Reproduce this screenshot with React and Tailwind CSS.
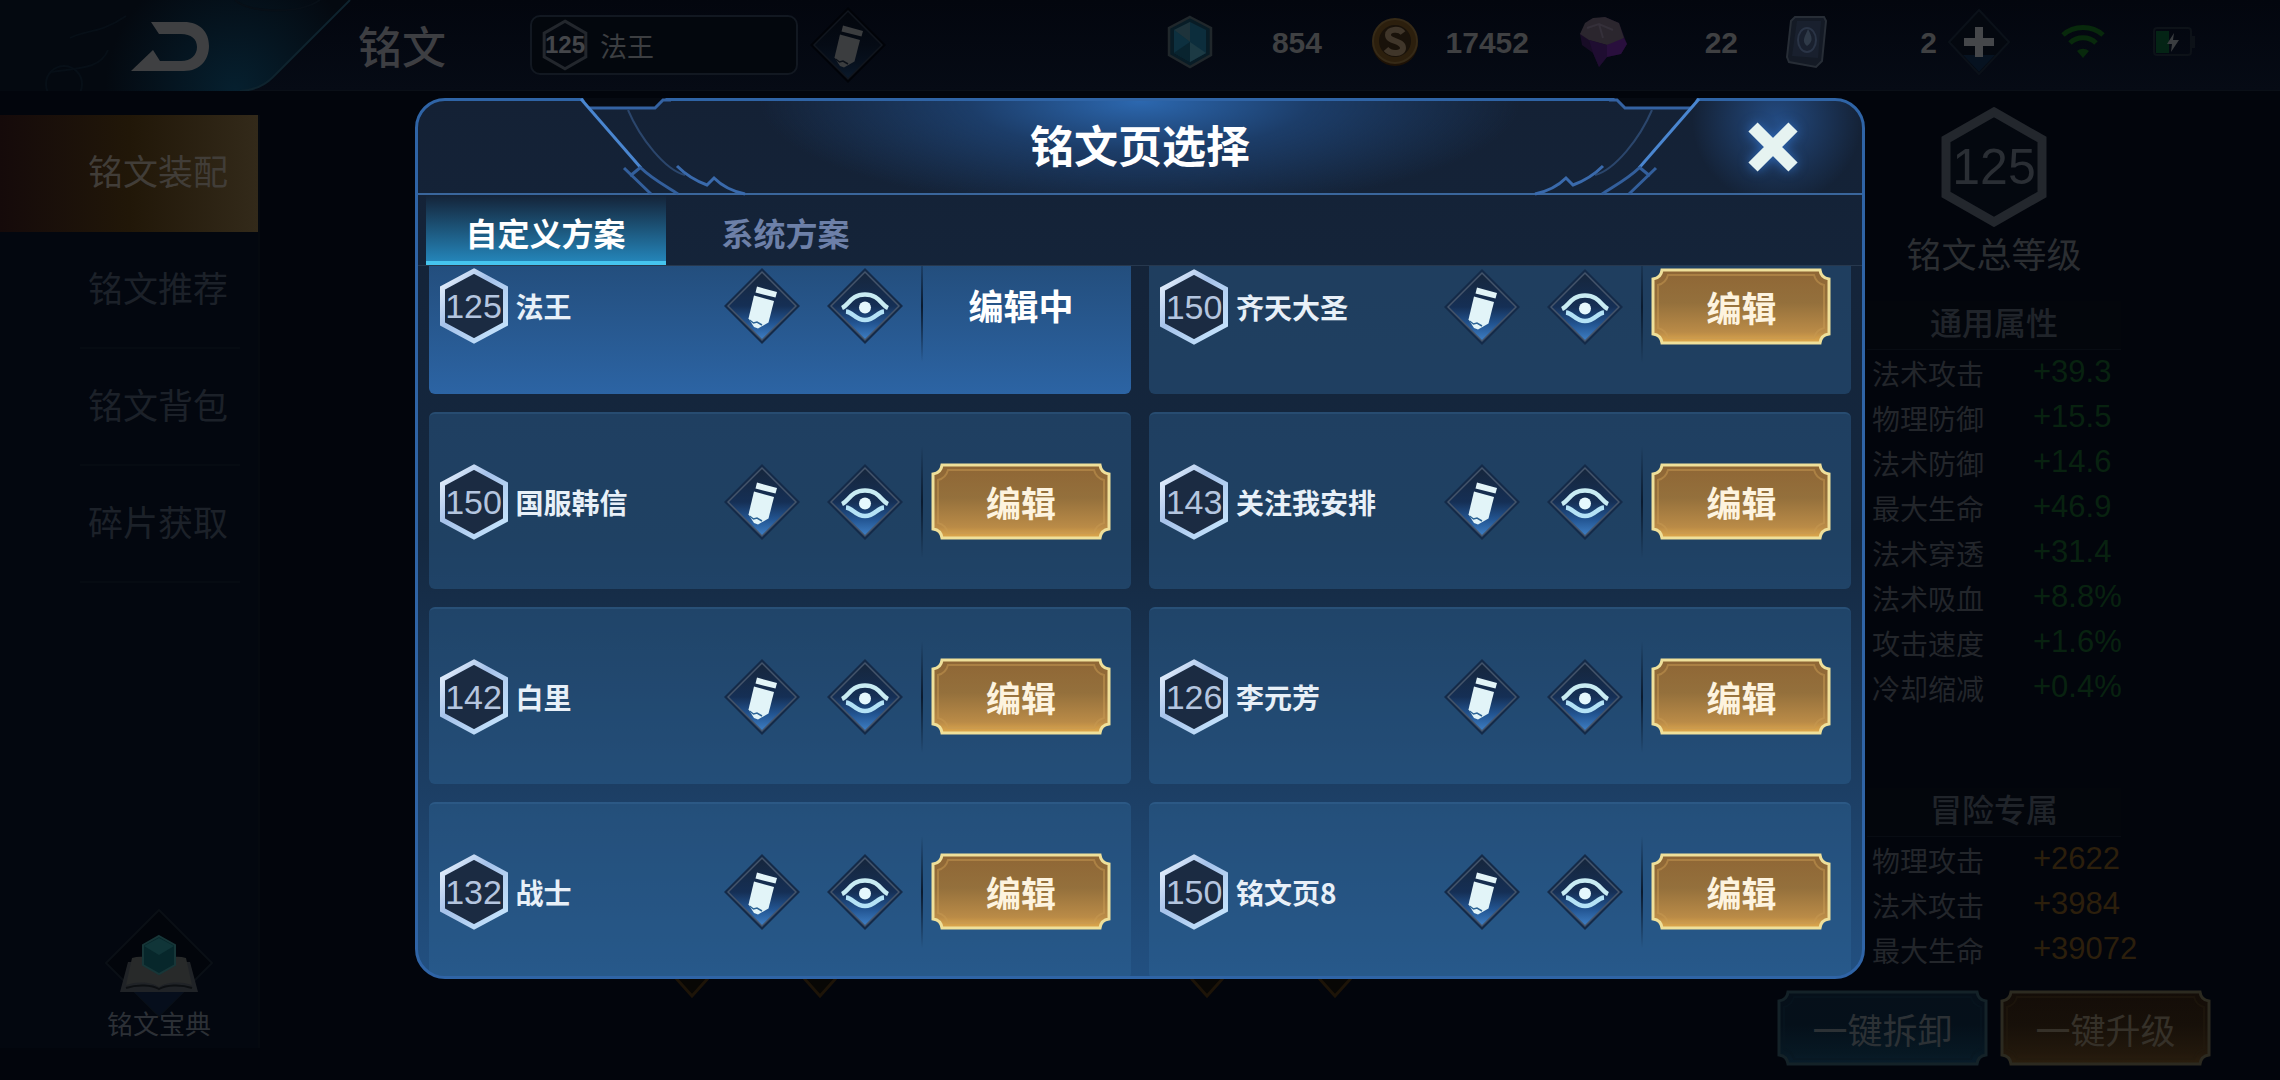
import { useId, useLayoutEffect, useRef, useState } from 'react'
import clsx from 'clsx'

const PAGES = [
  { level: 125, name: '法王', editing: true },
  { level: 150, name: '齐天大圣' },
  { level: 150, name: '国服韩信' },
  { level: 143, name: '关注我安排' },
  { level: 142, name: '白里' },
  { level: 126, name: '李元芳' },
  { level: 132, name: '战士' },
  { level: 150, name: '铭文页8' },
]

const TABS = ['自定义方案', '系统方案']
const MENU = ['铭文装配', '铭文推荐', '铭文背包', '碎片获取']

// Where the page list rests when the dialog opens
const LIST_SCROLL = 49

const COMMON_STATS = [
  ['法术攻击', '+39.3'],
  ['物理防御', '+15.5'],
  ['法术防御', '+14.6'],
  ['最大生命', '+46.9'],
  ['法术穿透', '+31.4'],
  ['法术吸血', '+8.8%'],
  ['攻击速度', '+1.6%'],
  ['冷却缩减', '+0.4%'],
]

const ADVENTURE_STATS = [
  ['物理攻击', '+2622'],
  ['法术攻击', '+3984'],
  ['最大生命', '+39072'],
]

// ─── Icons ────────────────────────────────────────────────────────────────────

function DiamondFrame({ dim, children }) {
  const id = useId()
  return (
    <svg className="size-[76px]" viewBox="0 0 76 76" aria-hidden>
      <defs>
        <linearGradient id={id} x1="0" y1="0" x2="0" y2="1">
          <stop offset="0" stopColor={dim ? '#03060c' : '#16263c'} />
          <stop offset="0.5" stopColor={dim ? '#050b15' : '#152f55'} />
          <stop offset="0.75" stopColor={dim ? '#07101d' : '#225491'} />
          <stop offset="1" stopColor={dim ? '#0b1a2c' : '#3f80c6'} />
        </linearGradient>
      </defs>
      <path d="M38 0 76 38 38 76 0 38Z" fill={dim ? '#010308' : '#142a48'} />
      <path
        d="M38 4 72 38 38 72 4 38Z"
        fill={`url(#${id})`}
        stroke={dim ? '#10151d' : '#44546a'}
        strokeWidth="1.5"
      />
      {children}
    </svg>
  )
}

function PencilDiamond({ dim }) {
  return (
    <DiamondFrame dim={dim}>
      <g fill={dim ? '#3b3d3f' : '#e2f4f8'}>
        <path d="M33 18.500 53 24 51.500 29.500 31.500 24.500Z" />
        <path d="M30 27.500 50 33 44.500 54.500 34 60.500 30 59 24.500 50.500Z" />
      </g>
      <path d="M25.500 52 29.500 55 33 54 38 57" fill="none" stroke={dim ? '#0b1018' : '#2c6395'} strokeWidth="1.5" />
    </DiamondFrame>
  )
}

function EyeDiamond() {
  return (
    <DiamondFrame>
      <g fill="none" stroke="#b4e2f6" strokeWidth="4.500">
        <path d="M15 40C22 37 24 26.500 38 26.500S54 37 61 40" stroke="#c8ebf2" />
        <path d="M19 43.500C26 44 28 52 38 52S50 44 57 43.500" />
      </g>
      <circle cx="38" cy="39.500" r="6" fill="#e6f8fd" />
    </DiamondFrame>
  )
}

function HexBadge({ level }) {
  const id = useId()
  return (
    <div className="grid shrink-0 place-items-center">
      <svg className="col-start-1 row-start-1 h-[76px] w-[68px]" viewBox="0 0 68 76" aria-hidden>
        <defs>
          <linearGradient id={id} x1="0" y1="0" x2="1" y2="1">
            <stop offset="0" stopColor="#f1f8ff" />
            <stop offset="0.4" stopColor="#a6c2ea" />
            <stop offset="1" stopColor="#c9e8ff" />
          </linearGradient>
        </defs>
        <path d="M34 3 65.500 20V56L34 73 2.500 56V20Z" fill="#1b2b42" stroke={`url(#${id})`} strokeWidth="5" />
      </svg>
      <span className="col-start-1 row-start-1 font-['Liberation_Sans',sans-serif] text-[34px] leading-none text-[#b4c5df]">
        {level}
      </span>
    </div>
  )
}

function GemIcon() {
  return (
    <svg className="h-[54px] w-[46px]" viewBox="0 0 46 54" aria-hidden>
      <path d="M23 2 44 13V40L23 52 2 40V13Z" fill="#081c26" stroke="#20272b" strokeWidth="2.5" />
      <path d="M23 7 39 15V38L23 47 7 38V15Z" fill="#0c2d3c" />
      <path d="M23 7 7 15 23 27Z" fill="#1e333b" />
      <path d="M7 15V38L23 27Z" fill="#0d303f" />
      <path d="M23 27 39 38 23 47Z" fill="#1c3a44" />
      <path d="M7 38 23 47V27Z" fill="#09242f" />
    </svg>
  )
}

function CoinIcon() {
  return (
    <svg className="size-[50px]" viewBox="0 0 50 50" aria-hidden>
      <circle cx="25" cy="26" r="23" fill="#1e1206" />
      <circle cx="25" cy="24" r="22" fill="#2c1f0d" stroke="#362a17" strokeWidth="2" />
      <circle cx="25" cy="24" r="16" fill="#19120a" />
      <path
        d="M33 16C29 11 18 12 18 18 18 25 33 23 33 31 33 37 21 38 16 32"
        fill="none"
        stroke="#40362a"
        strokeWidth="6"
      />
    </svg>
  )
}

function CrystalIcon() {
  return (
    <svg className="h-[52px] w-[52px]" viewBox="0 0 52 52" aria-hidden>
      <path d="M3 18 12 4 28 1 42 7 50 28 44 38 30 41 22 51 16 37 5 29Z" fill="#180c26" />
      <path d="M3 18 8 7 16 2 28 1 42 7 47 22 40 27 30 29 12 24Z" fill="#2b262e" />
      <path d="M12 24 30 29 30 41 22 51 16 37Z" fill="#1f0d31" />
      <path d="M30 29 47 22 50 28 44 38 30 41Z" fill="#290f3d" />
      <path d="M10 12 22 8 36 14M22 8 26 22" fill="none" stroke="#35303a" strokeWidth="2" />
    </svg>
  )
}

function CardIcon() {
  return (
    <svg className="h-[54px] w-[42px]" viewBox="0 0 42 54" aria-hidden>
      <path d="M9 2H38L40 6 36 46 30 52 3 47 1 42 5 6Z" fill="#141a25" stroke="#272d36" strokeWidth="2" />
      <path d="M11 6H35L32 43 6 41Z" fill="#19202e" />
      <ellipse cx="21" cy="25" rx="9" ry="12" fill="none" stroke="#2a3446" strokeWidth="2" />
      <path d="M22 14C26 22 28 26 21 31 15 26 19 22 22 14Z" fill="#2f3a48" />
    </svg>
  )
}

function PlusDiamond() {
  return (
    <svg className="h-[68px] w-[68px]" viewBox="0 0 68 68" aria-hidden>
      <path d="M34 2 64 34 34 66 4 34Z" fill="#04080f" stroke="#0b1119" strokeWidth="2" />
      <path d="M34 64 18 47H50Z" fill="#061220" />
      <path d="M30 19H38V30H49V38H38V49H30V38H19V30H30Z" fill="#45474a" />
    </svg>
  )
}

function WifiIcon() {
  return (
    <svg className="h-[36px] w-[44px]" viewBox="0 0 44 36" fill="none" stroke="#08290c" strokeWidth="5" aria-hidden>
      <path d="M2 11C13 1 31 1 42 11" />
      <path d="M9 19C16 12 28 12 35 19" />
      <path d="M16 27C20 24 24 24 28 27L22 34Z" fill="#08290c" stroke="none" />
    </svg>
  )
}

function BatteryIcon() {
  return (
    <svg className="h-[30px] w-[42px]" viewBox="0 0 42 30" aria-hidden>
      <rect x="1" y="1" width="37" height="27" rx="3" fill="none" stroke="#0d1218" strokeWidth="2" />
      <rect x="39" y="9" width="3" height="12" fill="#0d1218" />
      <rect x="3" y="4" width="13" height="22" fill="#042415" />
      <path d="M21 6 14 17H19L18 25 26 13H20Z" fill="#3a3d40" />
    </svg>
  )
}

function BookIcon() {
  return (
    <svg className="h-[110px] w-[110px]" viewBox="0 0 110 110" aria-hidden>
      <path d="M55 2 108 55 55 108 2 55Z" fill="#02050b" stroke="#0a0f15" strokeWidth="2" />
      <path d="M30 84H80L55 108Z" fill="#060e1c" />
      <path d="M24 54H86L94 84H16Z" fill="#202327" />
      <path d="M28 50C38 47 48 50 55 55 62 50 72 47 82 50L88 77C76 73 62 74 55 79 48 74 34 73 22 77Z" fill="#282a2a" />
      <path d="M22 80C34 76 48 77 55 81 62 77 76 76 88 80" fill="none" stroke="#0d1013" strokeWidth="2" />
      <path d="M55 28 71 37V57L55 66 39 57V37Z" fill="#07272b" stroke="#173638" strokeWidth="2" />
      <path d="M55 30 70 38 55 47 40 38Z" fill="#103538" />
    </svg>
  )
}

// Pill and total level share the same dim hexagon
function DimHex({ className, stroke }) {
  return (
    <svg className={className} viewBox="0 0 106 118" preserveAspectRatio="none" aria-hidden>
      <path d="M53 5 101 32V86L53 113 5 86V32Z" fill="#04080f" stroke="#23272d" strokeWidth={stroke} />
    </svg>
  )
}

// ─── Buttons ──────────────────────────────────────────────────────────────────

const TONES = {
  gold: { top: '#8f6635', mid: '#94703c', low: '#ba8b47', end: '#e0a94c', rim: '#efe09a', inner: '#c79a52' },
  dimGold: { top: '#140d08', mid: '#171009', low: '#22180c', end: '#2a1e0e', rim: '#2c2a20', inner: '#22190e' },
  dimBlue: { top: '#06101a', mid: '#05101a', low: '#071823', end: '#091c2a', rim: '#142228', inner: '#081620' },
}

function PlateButton({ tone, width, height, className, children }) {
  const id = useId()
  const t = TONES[tone]
  const r = width - 2
  const b = height - 2
  const outline = `M11 2H${r - 9}Q${r - 8} 10 ${r} 11V${b - 9}Q${r - 8} ${b - 8} ${r - 9} ${b}H11Q10 ${b - 8} 2 ${b - 9}V11Q10 10 11 2Z`
  const inner = `M17 7H${r - 15}Q${r - 13} 15 ${r - 5} 17V${b - 15}Q${r - 13} ${b - 13} ${r - 15} ${b - 5}H17Q15 ${b - 13} 7 ${b - 15}V17Q15 15 17 7Z`
  return (
    <button type="button" className={clsx('grid shrink-0 place-items-center', className)}>
      <svg
        className="col-start-1 row-start-1"
        width={width}
        height={height}
        viewBox={`0 0 ${width} ${height}`}
        aria-hidden
      >
        <defs>
          <linearGradient id={id} x1="0" y1="0" x2="0" y2="1">
            <stop offset="0" stopColor={t.top} />
            <stop offset="0.45" stopColor={t.mid} />
            <stop offset="0.85" stopColor={t.low} />
            <stop offset="1" stopColor={t.end} />
          </linearGradient>
        </defs>
        <path d={outline} fill={`url(#${id})`} stroke={t.rim} strokeWidth="3" />
        <path d={inner} fill="none" stroke={t.inner} strokeOpacity="0.5" strokeWidth="2" />
      </svg>
      <span className="col-start-1 row-start-1 text-[35px] leading-none">{children}</span>
    </button>
  )
}

// ─── Background screen ────────────────────────────────────────────────────────

function Resource({ icon, value }) {
  return (
    <div className="flex items-center">
      {icon}
      <span className="w-[109px] text-right font-['Liberation_Sans',sans-serif] text-[30px] font-bold text-[#3f4042]">
        {value}
      </span>
    </div>
  )
}

function TopBar() {
  return (
    <header className="flex h-[91px] shrink-0 items-center border-b border-[#0a0f17] bg-linear-to-b from-[#03060e] to-[#060b15]">
      <button type="button" aria-label="返回" className="shrink-0">
        <svg className="h-[91px] w-[358px]" viewBox="0 0 358 91" aria-hidden>
          <defs>
            <radialGradient id="nav-fill" gradientUnits="userSpaceOnUse" cx="235" cy="91" r="130">
              <stop offset="0" stopColor="#06202f" />
              <stop offset="1" stopColor="#040910" />
            </radialGradient>
          </defs>
          <path d="M0 0H350L273 77Q260 90 240 91H0Z" fill="url(#nav-fill)" />
          <path d="M350 0 273 77Q260 90 240 91" fill="none" stroke="#0e232e" strokeWidth="2" />
          <g fill="none" stroke="#070f17" strokeWidth="2">
            <path d="M126 16C100 34 84 30 70 38M108 50C100 70 76 68 50 72" />
            <circle cx="64" cy="84" r="18" />
            <path d="M235 0C250 14 300 14 320 0" />
          </g>
          <path
            d="M151 22H184C200 22 209 32 209 46S200 71 184 71H131L153 50 160 61H181C191 61 197 55 197 47S191 34 181 34H159Z"
            fill="#3f4042"
          />
        </svg>
      </button>
      <h1 className="text-[44px] leading-none font-medium text-[#3d3e42]">铭文</h1>
      <div className="ml-[84px] flex h-[60px] w-[268px] items-center rounded-[10px] border-2 border-[#121821] bg-[#03070d] pl-2.5">
        <div className="grid place-items-center">
          <DimHex className="col-start-1 row-start-1 h-[52px] w-[46px]" stroke={7} />
          <span className="col-start-1 row-start-1 font-['Liberation_Sans',sans-serif] text-[24px] leading-none font-bold text-[#44464a]">
            125
          </span>
        </div>
        <span className="ml-3 text-[27px] leading-none text-[#3c3e41]">法王</span>
      </div>
      <button type="button" aria-label="重命名" className="ml-3 shrink-0">
        <PencilDiamond dim />
      </button>
      <div className="mr-[85px] ml-auto flex items-center gap-12 pb-1.5">
        <Resource icon={<GemIcon />} value="854" />
        <Resource icon={<CoinIcon />} value="17452" />
        <Resource icon={<CrystalIcon />} value="22" />
        <div className="flex items-center gap-2">
          <Resource icon={<CardIcon />} value="2" />
          <button type="button" aria-label="增加">
            <PlusDiamond />
          </button>
        </div>
        <WifiIcon />
        <BatteryIcon />
      </div>
    </header>
  )
}

function SideMenu() {
  return (
    <nav className="mt-6 mb-8 flex w-[260px] shrink-0 flex-col border-r-2 border-[#05090f] bg-[#03070f]">
      {MENU.map((item, i) => (
        <button
          key={item}
          type="button"
          className={clsx(
            'flex h-[117px] text-[35px]',
            i === 0
              ? 'bg-linear-to-r from-[#150a0a] via-[#211708] to-[#332a1a] text-[#413d38]'
              : 'text-[#1c2129]'
          )}
        >
          <span
            className={clsx(
              'ml-20 flex h-full w-40 items-center border-b-2 pb-1 pl-2',
              i === 0 ? 'border-transparent' : 'border-[#060b12]'
            )}
          >
            {item}
          </span>
        </button>
      ))}
      <a href="#codex" className="mt-auto flex flex-col items-center pb-3 pl-[60px] text-[26px] text-[#2c3036]">
        <BookIcon />
        <span className="-mt-2 leading-none">铭文宝典</span>
      </a>
    </nav>
  )
}

function SlotPair() {
  return (
    <div className="flex gap-[88px]">
      {[0, 1].map((n) => (
        <svg key={n} className="h-[44px] w-[40px]" viewBox="0 0 40 44" aria-hidden>
          <path d="M20 2 38 22 20 42 2 22Z" fill="#080705" stroke="#1d1408" strokeWidth="3" />
        </svg>
      ))}
    </div>
  )
}

function StatBlock({ title, rows, valueClass }) {
  return (
    <section>
      <h3 className="mx-[90px] border-b border-[#080c13] bg-[#03060c] pb-2 text-center text-[32px] leading-[40px] font-medium text-[#20242a]">
        {title}
      </h3>
      <dl>
        {rows.map(([label, value]) => (
          <div key={label} className="flex h-[45px] items-center pl-[95px]">
            <dt className="w-[161px] text-[28px] text-[#23262b]">{label}</dt>
            <dd className={clsx("font-['Liberation_Sans',sans-serif] text-[31px]", valueClass)}>{value}</dd>
          </div>
        ))}
      </dl>
    </section>
  )
}

function StatsPanel() {
  return (
    <aside className="mr-[69px] flex w-[434px] shrink-0 flex-col pt-4 pb-3.5">
      <div className="grid place-items-center">
        <DimHex className="col-start-1 row-start-1 h-[120px] w-[106px]" stroke={9} />
        <span className="col-start-1 row-start-1 font-['Liberation_Sans',sans-serif] text-[50px] leading-none text-[#2a2e34]">
          125
        </span>
      </div>
      <h2 className="mt-1.5 text-center text-[35px] leading-[40px] text-[#2b2e32]">铭文总等级</h2>
      <div className="mt-7 flex flex-1 flex-col">
        <StatBlock title="通用属性" rows={COMMON_STATS} valueClass="text-[#082210]" />
        <div className="mt-[78px]">
          <StatBlock title="冒险专属" rows={ADVENTURE_STATS} valueClass="text-[#2c1f0c]" />
        </div>
      </div>
      <div className="flex justify-between">
        <PlateButton tone="dimBlue" width={211} height={76} className="text-[#2c3135]">
          一键拆卸
        </PlateButton>
        <PlateButton tone="dimGold" width={211} height={76} className="text-[#353028]">
          一键升级
        </PlateButton>
      </div>
    </aside>
  )
}

// ─── Page picker dialog ───────────────────────────────────────────────────────

function CornerTrim({ className }) {
  return (
    <svg
      className={clsx('pointer-events-none absolute -top-[3px] h-[98px] w-[340px]', className)}
      viewBox="0 0 340 98"
      fill="none"
      aria-hidden
    >
      <path d="M168 0H251L241 10H174Z" fill="#060a12" />
      <path d="M174 10H240L248 2H256" stroke="#3462a2" strokeWidth="3" />
      <path d="M166 1 226 70" stroke="#4a86d0" strokeWidth="3" />
      <path d="M226 70C236 80 249 87 263 96" stroke="#335f9c" strokeWidth="3" />
      <path d="M209 70 236 96M215 78 226 69" stroke="#335f9c" strokeWidth="3" />
      <path d="M213 12C225 40 250 72 270 77" stroke="#2b466c" strokeWidth="2" />
      <path d="M262 68C270 76 281 83 292 87L299 80C306 87 316 93 330 96" stroke="#3a6aac" strokeWidth="3" />
    </svg>
  )
}

function PageCard({ page }) {
  return (
    <li
      className={clsx(
        'flex h-[177px] items-center rounded-md pr-5 pl-[11px]',
        page.editing
          ? 'bg-linear-to-b from-[#20466f] to-[#2c64a4]'
          : 'border-t-2 border-[#4a83b4]/20 bg-[#306798]/40'
      )}
    >
      <HexBadge level={page.level} />
      <span className="ml-2 flex-1 text-[28px] font-bold text-[#e8f0f8]">{page.name}</span>
      <button type="button" aria-label={`重命名 ${page.name}`}>
        <PencilDiamond />
      </button>
      <button type="button" aria-label={`预览 ${page.name}`} className="ml-[27px]">
        <EyeDiamond />
      </button>
      <div className="mr-2 ml-[18px] h-[112px] w-0.5 bg-linear-to-b from-transparent via-[#0a1a2e] to-transparent" />
      {page.editing ? (
        <span className="w-[180px] text-center text-[35px] font-bold text-white">编辑中</span>
      ) : (
        <PlateButton tone="gold" width={180} height={77} className="font-bold text-[#fdf3df]">
          编辑
        </PlateButton>
      )}
    </li>
  )
}

function PageDialog() {
  const [tab, setTab] = useState(0)
  const listRef = useRef(null)

  useLayoutEffect(() => {
    listRef.current.scrollTop = LIST_SCROLL
  }, [])

  return (
    <div
      role="dialog"
      aria-label="铭文页选择"
      className="relative flex min-h-0 w-7/11 flex-1 flex-col rounded-[30px] border-3 border-[#2f64a6] bg-linear-to-b from-[#142135] via-[#142840] to-[#225081]"
    >
      <div className="flex h-[94px] shrink-0 items-stretch rounded-t-[27px] border-b-2 border-[#3a669c] bg-radial-[380px_110px_at_50%_0%] from-[#2c68b0] via-[#1c3d69] via-45% to-transparent">
        <div className="w-[170px]" />
        <h2 className="flex flex-1 items-center justify-center pb-1.5 text-[44px] font-bold text-white">铭文页选择</h2>
        <button
          type="button"
          aria-label="关闭"
          className="flex w-[170px] items-center justify-center rounded-tr-[27px] bg-radial-[85px_85px_at_50%_20%] from-[#234a80] to-transparent pr-2"
        >
          <svg className="size-[56px] drop-shadow-[0_0_6px_#2f69b8]" viewBox="0 0 56 56" aria-hidden>
            <path d="M8 8 48 48M48 8 8 48" stroke="#e6f3f1" strokeWidth="13" />
          </svg>
        </button>
      </div>
      <CornerTrim className="-left-[3px]" />
      <CornerTrim className="-right-[3px] -scale-x-100" />

      <div role="tablist" className="flex h-[71px] shrink-0 border-b border-[#27384e] pl-2">
        {TABS.map((label, i) => (
          <button
            key={label}
            type="button"
            role="tab"
            aria-selected={tab === i}
            onClick={() => setTab(i)}
            className={clsx(
              'w-[240px] border-b-4 pt-2 text-[32px] font-bold',
              tab === i
                ? 'border-[#45c4ee] bg-linear-to-b from-transparent to-[#2484b8] text-white'
                : 'border-transparent text-[#6d80a8]'
            )}
          >
            {label}
          </button>
        ))}
      </div>

      <div ref={listRef} className="min-h-0 flex-1 overflow-y-auto rounded-b-[27px] px-[11px] [scrollbar-width:none]">
        <ul className="grid grid-cols-2 gap-[18px]">
          {PAGES.map((page) => (
            <PageCard key={page.name} page={page} />
          ))}
        </ul>
      </div>
    </div>
  )
}

export default function App() {
  return (
    <div className="relative flex h-screen flex-col overflow-hidden bg-[#02050c] font-['Noto_Sans_CJK_SC',sans-serif]">
      <TopBar />
      <div className="flex min-h-0 flex-1">
        <SideMenu />
        <main className="flex flex-1 items-end justify-center gap-[347px] pr-2.5 pb-[82px]">
          <SlotPair />
          <SlotPair />
        </main>
        <StatsPanel />
      </div>
      <div className="absolute inset-0 flex flex-col items-center pt-[98px] pb-[101px]">
        <PageDialog />
      </div>
    </div>
  )
}
